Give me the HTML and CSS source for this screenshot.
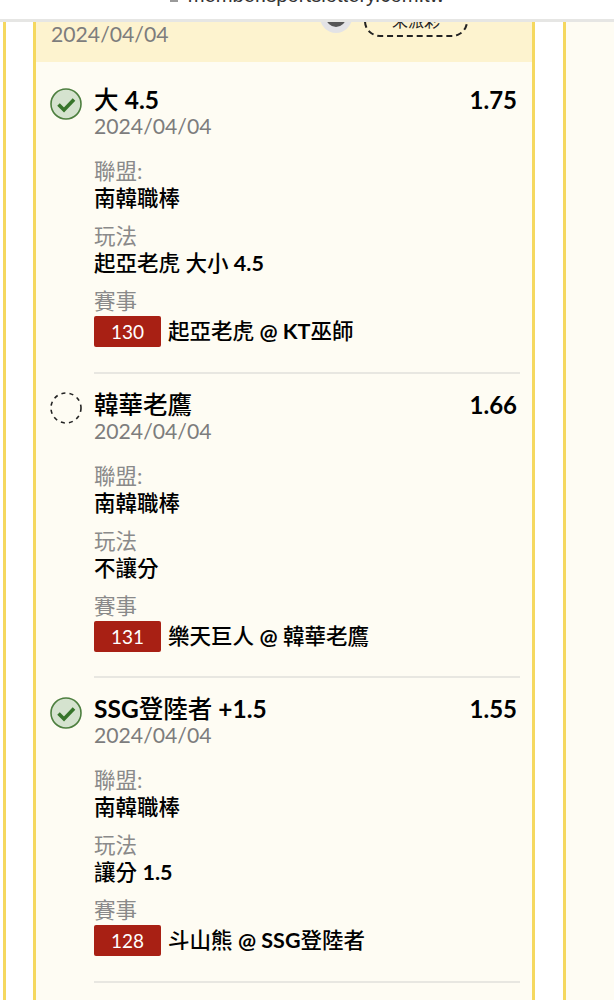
FILE: index.html
```html
<!DOCTYPE html>
<html lang="zh-Hant">
<head>
    <meta charset="UTF-8">
    <meta name="viewport" content="width=device-width, initial-scale=1.0">
    <title>投注紀錄</title>
    <link rel="stylesheet" href="styles.css">
</head>
<body>

    <div class="urlbar">
        <div class="url"><span class="lock"></span>member.sportslottery.com.tw</div>
    </div>

    <div class="pager">
        <div class="card card-prev"></div>

        <div class="card card-main">
            <div class="ticket-head">
                <div class="date head-date">2024/04/04</div>
                <div class="head-side">
                    <div class="head-icon"><span class="head-dot"></span></div>
                    <div class="pill">未派彩</div>
                </div>
            </div>

            <div class="bet">
                <svg class="status" viewBox="0 0 32 32"><circle cx="16" cy="16" r="15" fill="#d5e3cf" stroke="#4d7f3f" stroke-width="1.6"/><path d="M8.5 16.5l5.5 5.5 10-10.5" fill="none" stroke="#37752b" stroke-width="3.6"/></svg>
                <div class="bet-body">
                    <div class="bet-top">
                        <div class="bet-name">大 <b>4.5</b></div>
                        <div class="odds">1.75</div>
                    </div>
                    <div class="date">2024/04/04</div>
                    <div class="label label-first">聯盟:</div>
                    <div class="value">南韓職棒</div>
                    <div class="label">玩法</div>
                    <div class="value">起亞老虎 大小 <b>4.5</b></div>
                    <div class="label">賽事</div>
                    <div class="game"><span class="game-no">130</span><span class="value">起亞老虎 <b>@ KT</b>巫師</span></div>
                </div>
            </div>

            <div class="bet">
                <svg class="status" viewBox="0 0 32 32"><circle cx="16" cy="16" r="15" fill="none" stroke="#222" stroke-width="1.6" stroke-dasharray="4 4.2"/></svg>
                <div class="bet-body">
                    <div class="bet-top">
                        <div class="bet-name">韓華老鷹</div>
                        <div class="odds">1.66</div>
                    </div>
                    <div class="date">2024/04/04</div>
                    <div class="label label-first">聯盟:</div>
                    <div class="value">南韓職棒</div>
                    <div class="label">玩法</div>
                    <div class="value">不讓分</div>
                    <div class="label">賽事</div>
                    <div class="game"><span class="game-no">131</span><span class="value">樂天巨人 <b>@</b> 韓華老鷹</span></div>
                </div>
            </div>

            <div class="bet">
                <svg class="status" viewBox="0 0 32 32"><circle cx="16" cy="16" r="15" fill="#d5e3cf" stroke="#4d7f3f" stroke-width="1.6"/><path d="M8.5 16.5l5.5 5.5 10-10.5" fill="none" stroke="#37752b" stroke-width="3.6"/></svg>
                <div class="bet-body">
                    <div class="bet-top">
                        <div class="bet-name"><b>SSG</b>登陸者 <b>+1.5</b></div>
                        <div class="odds">1.55</div>
                    </div>
                    <div class="date">2024/04/04</div>
                    <div class="label label-first">聯盟:</div>
                    <div class="value">南韓職棒</div>
                    <div class="label">玩法</div>
                    <div class="value">讓分 <b>1.5</b></div>
                    <div class="label">賽事</div>
                    <div class="game"><span class="game-no">128</span><span class="value">斗山熊 <b>@ SSG</b>登陸者</span></div>
                </div>
            </div>
        </div>

        <div class="card card-next"></div>
    </div>

</body>
</html>
```

FILE: styles.css
```css
html, body {
    margin: 0;
    padding: 0;
    height: 1000px;
    overflow: hidden;
}

body {
    font-family: Lato, "Noto Sans CJK TC", sans-serif;
    background-color: #fff;
    color: #000;
}

.urlbar {
    height: 19px;
    overflow: hidden;
    background-color: #fff;
    border-bottom: 3px solid #e6e6e4;
    display: flex;
    justify-content: center;
    align-items: flex-end;
}

.url {
    font-family: "Liberation Sans", sans-serif;
    font-size: 20.2px;
    line-height: 20px;
    margin-bottom: 14px;
    color: #333;
    display: flex;
    align-items: center;
    gap: 10px;
}

.lock {
    width: 8px;
    height: 8px;
    margin-top: 6px;
    background-color: #9a9a9a;
}

.pager {
    height: 978px;
    display: flex;
    overflow: hidden;
    background-color: #fff;
}

.card {
    box-sizing: border-box;
    height: 100%;
    background-color: #fefcf3;
    border: solid #f5d85f;
    border-width: 0 3px;
}

.card-prev {
    width: 6px;
    flex: none;
    border-left: 0;
    background-color: #fff;
    margin-right: 27px;
}

.card-main {
    width: 502px;
    flex: none;
}

.card-next {
    flex: 1;
    margin-left: 28px;
    border-right: 0;
}

.ticket-head {
    height: 40px;
    padding: 0 15px;
    margin-bottom: 7px;
    background-color: #fdf3cf;
    display: flex;
    justify-content: space-between;
    align-items: flex-end;
    overflow: hidden;
}

.head-date {
    padding-bottom: 17px;
    color: #77736a;
}

.head-side {
    display: flex;
    align-items: flex-end;
    gap: 12px;
    padding-bottom: 25px;
    margin-right: 49px;
}

.head-icon {
    width: 32px;
    height: 32px;
    margin-bottom: 4px;
    border-radius: 50%;
    background-color: #e3e3e6;
    display: flex;
    align-items: center;
    justify-content: center;
}

.head-dot {
    width: 20px;
    height: 20px;
    border-radius: 50%;
    background-color: #555;
}

.pill {
    width: 104px;
    height: 32px;
    box-sizing: border-box;
    border: 2px dashed #222;
    border-radius: 16px;
    text-align: center;
    font-size: 16px;
    line-height: 28px;
    color: #222;
}

.bet {
    display: flex;
    gap: 12px;
    margin: 0 12px 0 14px;
}

.status {
    width: 32px;
    height: 32px;
    flex: none;
    margin-top: 18.5px;
}

.bet-body {
    flex: 1;
    padding: 16px 0 24.5px;
    border-bottom: 2px solid #e8e7e1;
}

.bet-top {
    display: flex;
    justify-content: space-between;
    padding-right: 3px;
}

.bet-name, .odds {
    font-size: 24.5px;
    line-height: 30px;
    font-weight: 500;
}

.odds {
    font-size: 24px;
    font-weight: 700;
}

.date {
    font-size: 21.2px;
    line-height: 22px;
    color: #7d7d7d;
}

.label {
    font-size: 21.5px;
    line-height: 27px;
    margin-top: 11px;
    color: #8a8a8a;
}

.label-first {
    margin-top: 21px;
}

.value {
    font-size: 21.5px;
    line-height: 27px;
    font-weight: 500;
}

.game {
    display: flex;
    align-items: center;
    gap: 7px;
    margin-top: 1px;
}

.game-no {
    width: 67px;
    height: 31px;
    border-radius: 2px;
    background-color: #a82014;
    color: #fff;
    font-size: 19px;
    line-height: 31px;
    text-align: center;
}
```
